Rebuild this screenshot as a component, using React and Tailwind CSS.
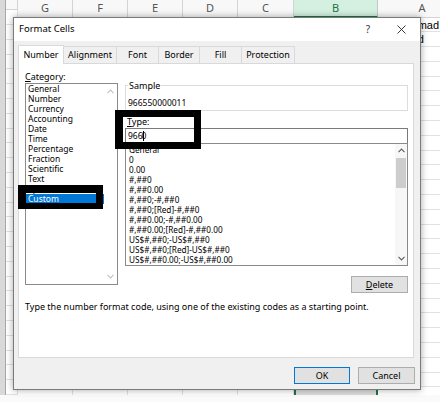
import React from 'react';

/**
 * Format Cells dialog over an Excel sheet (RTL column order).
 */

const COLUMNS = [
  { id: 'H', width: 'w-[12px]', label: '' },
  { id: 'G', width: 'w-[55px]', label: 'G' },
  { id: 'F', width: 'w-[55px]', label: 'F' },
  { id: 'E', width: 'w-[55px]', label: 'E' },
  { id: 'D', width: 'w-[55px]', label: 'D' },
  { id: 'C', width: 'w-[56px]', label: 'C' },
  { id: 'B', width: 'w-[84px]', label: 'B', selected: true },
  { id: 'A', width: 'w-[89px]', label: 'A' },
];

const CELL_TEXT = { A: ['Muhammad', 'Mahmud'] };

const TABS = [
  { label: 'Number', width: 'w-[46px]', active: true },
  { label: 'Alignment', width: 'w-[53px]' },
  { label: 'Font', width: 'w-[42px]' },
  { label: 'Border', width: 'w-[41px]' },
  { label: 'Fill', width: 'w-[42px]' },
  { label: 'Protection', width: 'w-[53px]' },
];

const CATEGORIES = [
  'General', 'Number', 'Currency', 'Accounting', 'Date', 'Time',
  'Percentage', 'Fraction', 'Scientific', 'Text', 'Special', 'Custom',
];

const FORMATS = [
  'General',
  '0',
  '0.00',
  '#,##0',
  '#,##0.00',
  '#,##0;-#,##0',
  '#,##0;[Red]-#,##0',
  '#,##0.00;-#,##0.00',
  '#,##0.00;[Red]-#,##0.00',
  'US$#,##0;-US$#,##0',
  'US$#,##0;[Red]-US$#,##0',
  'US$#,##0.00;-US$#,##0.00',
];

const ROW_COUNT = 26;

function Chevron({ up = false, color = '#606060' }) {
  return (
    <svg width="7" height="5" viewBox="0 0 7 5" fill="none">
      <path
        d={up ? 'M0.5 4.2 L3.5 1 L6.5 4.2' : 'M0.5 0.8 L3.5 4 L6.5 0.8'}
        stroke={color}
        strokeWidth="1.1"
      />
    </svg>
  );
}

function Sheet() {
  return (
    <div className="flex h-[395px] overflow-hidden">
      <div className="w-[6px] shrink-0 bg-[#d9d9d9] border-r border-[#a8a8a8]" />
      {COLUMNS.map((col) => (
        <div key={col.id} className={`${col.width} shrink-0 flex flex-col`}>
          {/* Column header */}
          <div
            className={
              col.selected
                ? 'h-[18px] flex items-center justify-center bg-[#d3f0e0] text-[#217346] border-r border-[#c6c6c6] border-b-2 border-b-[#217346] text-[11px]'
                : 'h-[18px] flex items-center justify-center bg-[#f8f8f8] text-[#555] border-r border-[#d4d4d4] border-b border-b-[#d4d4d4] text-[11px]'
            }
          >
            {col.label}
          </div>
          {/* Cells */}
          <div
            className={
              col.selected
                ? 'flex-1 flex flex-col bg-[#dcdcdc] border-x-2 border-[#217346]'
                : 'flex-1 flex flex-col bg-white'
            }
          >
            {Array.from({ length: ROW_COUNT }).map((_, r) => (
              <div
                key={r}
                className="h-[14.8px] shrink-0 border-b border-r border-[#e1e1e1] pl-[3px] text-[11px] leading-[14px] text-black whitespace-nowrap font-['Liberation_Sans',sans-serif]"
              >
                {CELL_TEXT[col.id]?.[r] || ''}
              </div>
            ))}
          </div>
        </div>
      ))}
    </div>
  );
}

function Dialog() {
  return (
    <div className="absolute left-[13px] top-[17px] w-[408px] h-[373px] flex flex-col border border-[#7a7a7a] bg-[#f0f0f0] shadow-[0_0_7px_rgba(0,0,0,0.35)] text-[9px] text-black">
      {/* Title bar */}
      <div className="h-[23px] shrink-0 flex items-center bg-white pl-[5px]">
        <span className="text-[9.5px]">Format Cells</span>
        <div className="ml-auto flex h-full items-center">
          <span className="w-[30px] text-center text-[10px] text-[#333]">?</span>
          <span className="w-[37px] flex items-center justify-center">
            <svg width="9" height="9" viewBox="0 0 9 9">
              <path d="M0.5 0.5 L8.5 8.5 M8.5 0.5 L0.5 8.5" stroke="#222" strokeWidth="0.9" />
            </svg>
          </span>
        </div>
      </div>

      {/* Body */}
      <div className="flex-1 flex flex-col px-[4px] pt-[4px]">
        {/* Tabs */}
        <div className="h-[19px] flex items-end">
          {TABS.map((tab, i) =>
            tab.active ? (
              <div
                key={tab.label}
                className={`${tab.width} h-[19px] relative z-10 flex items-center justify-center bg-white border border-b-0 border-[#d9d9d9]`}
              >
                {tab.label}
              </div>
            ) : (
              <div
                key={tab.label}
                className={`${tab.width} h-[17px] mb-px flex items-center justify-center border-t border-r border-[#d9d9d9] ${i === 0 ? 'border-l' : ''}`}
              >
                {tab.label}
              </div>
            )
          )}
        </div>

        {/* Panel */}
        <div className="-mt-px w-[396px] h-[295px] bg-white border border-[#d9d9d9] pl-[6px] pt-[7px]">
          <div className="flex items-start">
            {/* Category column */}
            <div className="w-[93px] flex flex-col">
              <div className="h-[12px] leading-[12px]">
                <span className="underline">C</span>ategory:
              </div>
              <div className="h-[202px] flex border border-[#8a8a8a] text-[8.5px]">
                <div className="flex-1 flex flex-col">
                  {CATEGORIES.map((c) => (
                    <div
                      key={c}
                      className={
                        c === 'Custom'
                          ? 'h-[10px] leading-[10px] pl-[2px] bg-[#0078d7] text-white'
                          : 'h-[10px] leading-[10px] pl-[2px]'
                      }
                    >
                      {c}
                    </div>
                  ))}
                </div>
                <div className="w-[13px] flex flex-col items-center justify-between py-[5px]">
                  <Chevron up color="#c2c2c2" />
                  <Chevron color="#c2c2c2" />
                </div>
              </div>
            </div>

            {/* Type column */}
            <div className="ml-[7px] w-[283px] flex flex-col pt-[12px]">
              <div className="relative mt-[2px] h-[26px] border border-[#dcdcdc] pl-[2px] pt-[12px]">
                <span className="absolute left-[2px] -top-[6px] bg-white px-px leading-[11px]">Sample</span>
                <div className="leading-[10px] text-[8.5px]">966550000011</div>
              </div>
              <div className="mt-[5px] h-[11px] leading-[11px] pl-[2px]">
                <span className="underline">T</span>ype:
              </div>
              <div className="mt-px h-[16px] flex items-center border border-[#7a7a7a] pl-[2px] text-[8.5px]">
                966
                <span className="inline-block w-px h-[10px] bg-black -mr-[2px]" />
                0
              </div>
              <div className="-mt-px h-[123px] flex border border-[#8a8a8a]">
                <div className="flex-1 flex flex-col pl-[3px] pt-px text-[8.2px]">
                  {FORMATS.map((f) => (
                    <div key={f} className="h-[10px] leading-[10px] whitespace-nowrap">
                      {f}
                    </div>
                  ))}
                </div>
                <div className="w-[12px] flex flex-col items-stretch bg-[#f7f7f7]">
                  <div className="h-[13px] flex items-center justify-center">
                    <Chevron up />
                  </div>
                  <div className="h-[30px] mx-px mt-px bg-[#cdcdcd]" />
                  <div className="mt-auto h-[13px] flex items-center justify-center">
                    <Chevron />
                  </div>
                </div>
              </div>
              <div className="mt-[10px] self-end w-[57px] h-[17px] flex items-center justify-center bg-[#e1e1e1] border border-[#adadad]">
                <span className="underline">D</span>elete
              </div>
            </div>
          </div>

          <div className="mt-[9px] leading-[10px] whitespace-nowrap">
            Type the number format code, using one of the existing codes as a starting point.
          </div>
        </div>

        {/* Footer buttons */}
        <div className="mt-[9px] flex justify-end gap-[8px] pr-px">
          <div className="w-[56px] h-[17px] flex items-center justify-center bg-[#e1e1e1] border border-[#0078d7]">
            OK
          </div>
          <div className="w-[57px] h-[17px] flex items-center justify-center bg-[#e1e1e1] border border-[#adadad]">
            Cancel
          </div>
        </div>
      </div>
    </div>
  );
}

export default function App() {
  return (
    <div className="relative w-[440px] h-[402px] overflow-hidden bg-[#fafafa] font-['Noto_Sans',sans-serif]">
      <Sheet />
      <Dialog />
      {/* Redaction boxes */}
      <div className="absolute left-[18px] top-[185px] w-[85px] h-[24px] border-t-[8px] border-b-[6px] border-l-[8px] border-r-[7px] border-black" />
      <div className="absolute left-[115px] top-[110px] w-[86px] h-[39px] border-[7px] border-l-[8px] border-black" />
    </div>
  );
}
